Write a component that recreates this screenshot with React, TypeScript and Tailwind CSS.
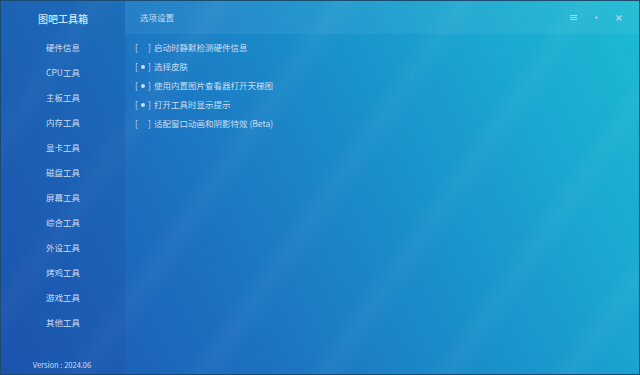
import React from 'react';

const menu = ['硬件信息', 'CPU工具', '主板工具', '内存工具', '显卡工具', '磁盘工具', '屏幕工具', '综合工具', '外设工具', '烤鸡工具', '游戏工具', '其他工具'];

const options = [
  { on: false, label: '启动时静默检测硬件信息' },
  { on: true, label: '选择皮肤' },
  { on: true, label: '使用内置图片查看器打开天梯图' },
  { on: true, label: '打开工具时显示提示' },
  { on: false, label: '适配窗口动画和阴影特效 (Beta)' },
];

export default function App() {
  return (
    <div
      className="relative flex h-[375px] w-[640px] overflow-hidden border border-[#1a4c72] bg-[linear-gradient(62deg,#1c55b3_0%,#1d6fc0_30%,#1a8fca_58%,#1aa8d0_80%,#1cbad3_100%)] text-[8.5px] text-[#c9def2]"
      style={{ fontFamily: '"Noto Sans CJK SC", "Noto Sans", sans-serif' }}
    >
      {/* faint diagonal stripes */}
      <div className="pointer-events-none absolute inset-0 bg-[repeating-linear-gradient(125deg,rgba(255,255,255,0)_0px,rgba(255,255,255,0)_60px,rgba(255,255,255,0.035)_80px,rgba(255,255,255,0)_100px)]" />

      <aside className="relative flex w-[124px] shrink-0 flex-col bg-[#1a4fa0]/25">
        <div className="flex h-[34px] items-center justify-center text-[10px] font-medium text-[#d2e5f6]">图吧工具箱</div>
        <nav className="flex flex-col">
          {menu.map((m) => (
            <div key={m} className="flex h-[25px] items-center justify-center">
              {m}
            </div>
          ))}
        </nav>
        <div className="mt-auto flex h-[15px] items-start justify-center pr-[2px] text-[7.5px]">Version : 2024.06</div>
      </aside>

      <main className="relative flex flex-1 flex-col">
        <header className="flex h-[33px] items-center bg-white/[0.05] pl-[15px] pr-[17px]">
          <span>选项设置</span>
          <div className="ml-auto flex items-center gap-[16px] text-[#b6d3ec]">
            <svg width="7" height="7" viewBox="0 0 7 7" fill="none" stroke="currentColor" strokeWidth="1">
              <path d="M0 1.5h7M0 3.5h7M0 5.5h7" />
            </svg>
            <svg width="7" height="7" viewBox="0 0 7 7" fill="currentColor">
              <rect x="2.5" y="2.5" width="2" height="2" />
            </svg>
            <svg width="6" height="6" viewBox="0 0 6 6" fill="none" stroke="currentColor" strokeWidth="1.2">
              <path d="M0.5 0.5l5 5M5.5 0.5l-5 5" />
            </svg>
          </div>
        </header>
        <div className="flex flex-col pl-[10px] pt-[4px]">
          {options.map((o) => (
            <div key={o.label} className="flex h-[19px] items-center">
              <span className="flex w-[19px] items-center">
                <span>[</span>
                <span className="flex w-[10px] items-center justify-center">
                  {o.on && <span className="h-[4px] w-[4px] rounded-full bg-[#c9def2]" />}
                </span>
                <span>]</span>
              </span>
              <span>{o.label}</span>
            </div>
          ))}
        </div>
      </main>
    </div>
  );
}
